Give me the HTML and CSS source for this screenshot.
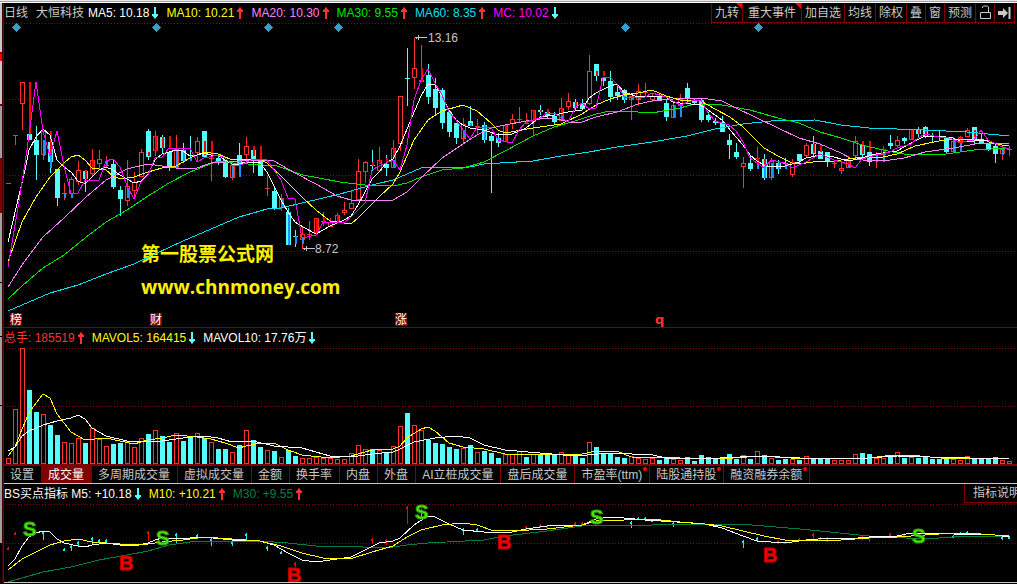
FILE: index.html
```html
<!DOCTYPE html>
<html lang="zh-CN">
<head>
<meta charset="utf-8">
<title>大恒科技 日线</title>
<link rel="stylesheet" href="styles.css">
</head>
<body>
<svg class="defs" aria-hidden="true">
  <symbol id="down" viewBox="0 0 6 12"><path d="M2 0h2v7h2v2H5v1H4v1.500H2V10H1V9H0V7h2z"/></symbol>
  <symbol id="up" viewBox="0 0 6 12"><path d="M2 12h2V5h2V3H5V2H4V.5H2V2H1v1H0v2h2z"/></symbol>
</svg>
<div class="window-edge"></div>
<div class="workspace">
  <aside class="rail"></aside>
  <main class="panes">
    <section class="pane price">
      <header class="bar">
        <div class="legend">
          <span class="plain">日线</span>
          <span class="plain name">大恒科技</span>
          <span class="white">MA5: 10.18<svg class="arrow down"><use href="#down"/></svg></span>
          <span class="yellow">MA10: 10.21<svg class="arrow up"><use href="#up"/></svg></span>
          <span class="pink">MA20: 10.30<svg class="arrow up"><use href="#up"/></svg></span>
          <span class="green">MA30: 9.55<svg class="arrow up"><use href="#up"/></svg></span>
          <span class="cyan">MA60: 8.35<svg class="arrow up"><use href="#up"/></svg></span>
          <span class="magenta">MC: 10.02<svg class="arrow down"><use href="#down"/></svg></span>
        </div>
        <nav class="tools">
          <button class="flag">九转</button>
          <button class="flag wide">重大事件</button>
          <button>加自选</button>
          <button>均线</button>
          <button>除权</button>
          <button>叠</button>
          <button>窗</button>
          <button>预测</button>
          <button class="icon" aria-label="解锁"><svg width="12" height="15" viewBox="0 0 12 15"><path d="M1.500 7.500h10v6h-10zM3.500 3V2l1-1h4l1 1v5.500" fill="none" stroke="#c8c8c8"/></svg></button>
          <button class="icon" aria-label="最后"><svg width="13" height="12" viewBox="0 0 13 12"><path d="M0 4h5V1l5 5-5 5V8H0zM10.500 0h2v12h-2z" fill="#c8c8c8"/></svg></button>
        </nav>
      </header>
      <svg id="price-chart" class="chart" viewBox="4 23 1013 304"></svg>
    </section>
    <section class="pane volume">
      <header class="bar">
        <div class="legend">
          <span class="red">总手: 185519<svg class="arrow up"><use href="#up"/></svg></span>
          <span class="yellow">MAVOL5: 164415<svg class="arrow down"><use href="#down"/></svg></span>
          <span class="white">MAVOL10: 17.76万<svg class="arrow down"><use href="#down"/></svg></span>
        </div>
      </header>
      <svg id="volume-chart" class="chart" viewBox="4 348 1013 116"></svg>
      <nav class="tabs">
        <button>设置</button>
        <button class="active">成交量</button>
        <button>多周期成交量</button>
        <button>虚拟成交量</button>
        <button>金额</button>
        <button>换手率</button>
        <button>内盘</button>
        <button>外盘</button>
        <button>AI立桩成交量</button>
        <button>盘后成交量</button>
        <button class="dot">市盈率(ttm)</button>
        <button class="dot">陆股通持股</button>
        <button class="dot">融资融券余额</button>
      </nav>
    </section>
    <section class="pane signal">
      <header class="bar">
        <div class="legend">
          <span class="white">BS买点指标 M5: +10.18<svg class="arrow down"><use href="#down"/></svg></span>
          <span class="yellow">M10: +10.21<svg class="arrow up"><use href="#up"/></svg></span>
          <span class="forest">M30: +9.55<svg class="arrow up"><use href="#up"/></svg></span>
        </div>
        <button class="explain">指标说明</button>
      </header>
      <svg id="signal-chart" class="chart" viewBox="4 503 1013 79"></svg>
    </section>
  </main>
</div>
<script src="charts.js"></script>
</body>
</html>
```
FILE: styles.css
```css
* { box-sizing: border-box; }

body {
  margin: 0;
  background: #000;
  color: #c8c8c8;
  font: 12px/18px "Liberation Sans", "Noto Sans CJK SC", sans-serif;
  overflow: hidden;
}

button {
  margin: 0;
  padding: 0;
  border: 0;
  background: none;
  color: inherit;
  font: inherit;
  white-space: nowrap;
}

.defs { display: none; }

.window-edge {
  height: 3px;
  background: linear-gradient(#e8e8e8 1px, #a0a0a0 1px 2px, #fff 2px);
}

.workspace { display: flex; }

.rail {
  flex: none;
  width: 3px;
  border-right: 1px solid #400000;
  background: linear-gradient(
    #c8c8c8 49px, #800000 49px 51px, #f00 51px 58px, #c8c8c8 58px 101px,
    #800000 101px 103px, #a0a0a0 103px 155px, #800000 155px 210px,
    #a0a0a0 210px 279px, #000 279px 280px, #a0a0a0 280px 333px,
    #000 333px 334px, #a0a0a0 334px 402px, #000 402px 403px,
    #a0a0a0 403px 540px, #000 540px);
}

.panes {
  flex: 1;
  min-width: 0;
  border-left: 1px solid #800000;
}

.pane { display: flex; flex-direction: column; }
.price { border-bottom: 1px solid #800000; }
.volume { border-bottom: 1px solid #c8c8c8; }
.signal { border-bottom: 1px solid #c8c8c8; }

.bar {
  display: flex;
  justify-content: space-between;
  height: 20px;
}
.signal .bar { height: 19px; }

.legend {
  display: flex;
  gap: 8px;
  line-height: 20px;
  white-space: nowrap;
}
.legend span { display: flex; align-items: center; }
.name { margin-right: -4px; }

.arrow { width: 6px; height: 12px; margin-left: 3px; }
.down { fill: #54fcfc; }
.up { fill: #ff3232; }

.plain { color: #c8c8c8; }
.white { color: #fff; }
.yellow { color: #ff0; }
.pink { color: #ff80ff; }
.green { color: #00e600; }
.cyan { color: #00e0f0; }
.magenta { color: #f0f; }
.red { color: #ff3232; }
.forest { color: #008040; }

.tools {
  display: flex;
  margin-right: 2px;
  border-right: 1px solid #800000;
}
.tools button {
  position: relative;
  padding: 0 3px;
  border-left: 1px solid #800000;
  border-bottom: 1px solid #800000;
}
.tools .wide { padding: 0 5px; }
.tools .icon { display: flex; align-items: center; }
.flag::after {
  content: "";
  position: absolute;
  top: 0;
  right: 0;
  border: solid transparent;
  border-width: 0 0 6px 6px;
  border-right: 0;
  border-top: 6px solid #f00;
  border-bottom: 0;
}

.chart { display: block; width: 100%; shape-rendering: crispEdges; }

.tabs {
  display: flex;
  height: 19px;
  border-top: 2px solid #800000;
}
.tabs button {
  position: relative;
  padding: 0 7px 0 6px;
  border-right: 1px solid #800000;
}
.tabs .active { background: #800000; color: #fff; }
.dot::after {
  content: "";
  position: absolute;
  top: 1px;
  right: 2px;
  width: 4px;
  height: 4px;
  border-radius: 2px;
  background: #f00;
}

.explain {
  width: 53px;
  overflow: hidden;
  padding-left: 8px;
  border-left: 1px solid #800000;
  border-bottom: 1px solid #800000;
  text-align: left;
}

.grid { stroke: #900000; stroke-dasharray: 1 2; }
.line { fill: none; stroke-width: 1; }
.quote { fill: #c8c8c8; font-size: 12px; }
.watermark {
  fill: #fff000;
  font: bold 19px "Noto Sans CJK SC", sans-serif;
}
.watermark.site { font-family: "Open Sans", sans-serif; }
.badge { fill: #fff; font: 12px "Noto Sans CJK SC", sans-serif; }
.letter-q { fill: #ff3232; font: bold 13px "DejaVu Sans", sans-serif; }
.mark { font: bold 20px "Liberation Sans", sans-serif; stroke-width: 1; }
.sell { fill: #50f000; stroke: #30a010; }
.buy { fill: #f00; stroke: #c00000; }
```
FILE: charts.js
```js
const RED = "#ff3232", CYAN = "#54fcfc", STRIP_RED = "#ff0000", STRIP_BLUE = "#1e90ff";
const xOf = i => 8 + 7 * i;
const rect = (x, y, w, h, fill) => `<rect x="${x}" y="${y}" width="${w}" height="${h}" fill="${fill}"/>`;
const box = (x, y, h) => `<rect x="${x - 1.5}" y="${y + .5}" width="4" height="${Math.max(h - 1, 1)}" fill="#000" stroke="${RED}"/>`;
const grid = y => `<path class="grid" d="M6 ${y}.5H1015"/>`;
const line = (color, pts) => `<polyline class="line" stroke="${color}" points="${pts}"/>`;
const text = (cls, x, y, s) => `<text class="${cls}" x="${x}" y="${y}">${s}</text>`;

/* One entry per day: kind high top bottom low, then optional strips "R|B from to".
   Kinds: r hollow, c filled, d red dash, e cyan dash, n none. */
const days = `
d 183 183 184 184;d 135 135 136 145;r 82 82 104 130;c 134 134 140 140 R 82 134;c 126 140 155 180;
r 131 131 155 160 B 140 156;c 131 142 162 173 R 131 155 B 155 168;c 169 169 198 206;d 183 193 194 200 B 193 198;r 177 179 194 196 B 193 198;
r 161 170 182 185;c 170 171 179 192 R 170 179;r 149 160 174 177 R 160 170;r 150 159 164 169;d 156 165 166 168 B 160 165;
c 160 164 187 189;c 186 190 199 216;r 160 186 201 206 B 188 198;r 172 182 191 196;r 149 152 177 177;
c 129 131 157 160 R 152 156;r 131 136 151 156 R 136 151;c 135 137 148 154 R 137 148;c 152 152 168 171 R 136 149;r 135 149 168 168 B 149 168;
c 143 150 161 163 B 150 161;n 136 136 136 161 B 157 161;r 137 141 153 162;c 131 131 157 157 R 141 155;d 141 158 159 181 R 141 157;
c 155 158 163 165;c 160 160 177 178;r 165 165 178 180 B 165 177;c 143 155 164 170 B 160 177;r 137 146 155 163;
c 150 150 160 173 R 146 156;c 150 160 176 176 R 146 160;d 176 188 189 196;c 188 191 208 210;r 194 198 208 211 B 199 207;
c 208 212 245 245 B 212 245;e 230 236 237 247 B 236 244;r 227 234 240 249 B 238 244;d 221 234 235 240;r 218 218 233 233 R 218 233;
d 212 221 222 226 R 218 222;r 218 222 227 227;r 213 215 222 222 R 215 222;r 202 210 213 215;r 190 203 209 209;
r 159 171 200 200;r 161 162 172 183;e 150 165 166 171 R 162 166;r 147 160 171 171 R 160 164;c 155 164 168 176 R 158 163;
r 140 148 168 168 R 148 158 B 160 167;r 96 96 144 151;e 48 78 79 106;r 38 68 78 89;d 45 80 82 82 R 68 82;
c 64 75 97 104;c 78 89 108 115;c 88 90 123 129;c 110 112 132 137;c 123 123 138 144;
r 118 124 139 144 B 130 138;c 106 121 126 126 B 123 126;d 119 126 127 134;c 122 125 140 143 B 125 140;c 134 136 141 193;
c 133 138 143 147 B 138 142;r 125 125 142 142 R 125 142;r 114 119 124 129;d 107 119 120 122;d 113 123 124 124 R 119 123;
r 110 110 122 135 R 110 121;c 105 110 112 115 R 110 112;c 109 112 116 118 R 109 113;c 112 116 122 125;r 98 108 121 121 R 108 116 B 116 121;
r 93 101 107 110;c 99 102 108 110 R 102 108;c 99 103 109 109;r 55 71 104 105;c 64 64 76 81 R 71 76;
c 78 78 81 86 R 71 76;c 71 81 97 102;c 86 92 96 100;c 89 90 100 103 B 96 100;r 96 96 100 120 B 97 100;
r 84 91 100 106 B 96 100;d 83 92 93 97;r 94 96 100 102;c 94 97 100 100;c 100 103 117 121;
r 103 105 118 118 B 105 117;r 94 99 106 110 B 106 117;c 83 88 98 103;c 98 100 103 105;c 98 100 120 122;
c 112 115 120 122;c 118 121 123 125;c 116 123 132 132;c 134 140 145 159;c 143 152 157 159;
r 157 163 167 188;c 155 163 169 171;d 147 158 159 164 R 158 164 B 164 169;c 154 159 178 180 R 159 165 B 165 178;r 158 161 178 180 B 163 178;
c 160 163 169 174 B 163 169;e 158 163 164 169 B 163 169;r 159 162 175 177 R 162 164;c 154 154 161 163;r 143 145 156 158;
c 136 144 154 156 R 144 153;c 145 151 159 159 R 145 152;c 152 152 162 167;d 160 163 164 168;r 161 168 171 174;
r 156 160 168 168 R 160 164 B 164 168;r 136 141 156 158;c 141 145 155 158 R 141 154;c 150 152 162 166 R 141 152;d 152 154 155 168 B 154 162;
r 146 149 155 155 R 149 154 B 154 162;c 135 143 146 149;r 136 140 146 147;c 137 138 141 144;r 129 129 140 140 R 129 139;
c 127 129 134 137 R 129 134;c 126 127 136 138 R 129 136;n 133 134 135 142;n 131 134 135 140;c 137 137 152 154;
r 137 141 152 153 B 141 152;r 136 137 143 143 R 137 143 B 143 152;r 128 130 137 137;c 127 127 141 145 R 130 137;c 133 141 143 144;
c 143 143 149 151;c 144 146 154 163;r 146 149 154 160 B 149 155;d 146 149 150 156`.trim().split(/;\s*/);

function candle(entry, i) {
  const p = entry.split(" "), kind = p[0], x = xOf(i);
  const [high, top, bottom, low] = p.slice(1, 5).map(Number);
  const color = "rd".includes(kind) ? RED : CYAN;
  let out = rect(x, high, 1, low - high, color);
  if (kind === "r") out += box(x, top, bottom - top);
  if (kind === "c") out += rect(x - 2, top, 5, bottom - top, color);
  if (kind === "d" || kind === "e") out += rect(x - 2, top, 5, bottom - top, color);
  for (let k = 5; k < p.length; k += 3) {
    out += rect(x, +p[k + 1], 2, p[k + 2] - p[k + 1], p[k] === "R" ? STRIP_RED : STRIP_BLUE);
  }
  return out;
}

const averages = [
  ["#00e0f0", "8,311 50,293 78,285 106,274 134,264 155,254 183,241 211,229 239,217 267,209 281,208 302,203 340,194 372,185 393,180 421,168 470,167 484,164 533,161 561,156 589,152 617,147 652,142 687,136 715,129 743,124 771,121 815,120 841,125 869,128 925,130 967,132 1009,136"],
  ["#00e600", "8,299 22,286 43,268 64,255 85,238 106,222 127,210 148,196 169,183 190,172 218,161 233,163 277,166 303,175 340,182 365,185 393,186 407,183 421,177 442,170 463,168 484,162 505,151 533,136 554,127 575,121 596,114 610,111 638,112 652,113 680,108 694,104 722,105 750,110 778,118 799,123 820,132 841,138 862,145 883,150 904,154 946,154 974,150 1009,148"],
  ["#ff80ff", "8,287 22,265 43,237 64,218 85,198 106,180 127,169 148,164 162,166 176,168 190,169 197,168 211,163 239,161 260,160 274,161 295,173 316,184 337,196 351,200 393,200 407,192 421,178 442,158 463,144 477,135 491,128 505,125 526,121 547,118 561,120 573,123 582,122 596,117 617,112 638,104 652,101 673,99 687,98 701,98 722,101 736,108 757,118 778,128 799,138 820,144 841,153 850,158 869,161 890,160 904,158 925,152 953,148 981,143 1009,143"],
  ["#ffff00", "8,262 22,222 36,197 50,177 64,163 71,157 78,155 85,160 92,168 106,170 113,176 120,179 134,177 148,172 162,168 176,166 190,158 204,152 218,154 230,159 260,159 267,163 281,176 302,197 316,210 330,221 351,224 358,218 379,197 393,184 400,172 414,140 428,120 442,111 463,105 477,111 491,123 498,130 505,133 533,128 561,124 582,114 596,105 610,99 624,95 638,93 652,90 666,96 680,100 701,101 715,109 730,117 743,127 757,141 764,148 778,156 792,163 806,163 820,161 834,161 848,159 862,157 883,157 897,154 915,146 939,141 953,139 981,139 995,144 1009,146"],
  ["#ffffff", "8,242 25,170 29,150 36,137 43,129 50,135 57,160 64,167 71,172 78,181 85,184 92,177 99,170 106,167 113,170 120,175 127,179 134,183 141,181 148,174 155,160 162,154 169,152 176,150 183,151 190,156 197,155 204,153 211,155 218,155 225,160 232,164 239,164 246,162 260,163 267,172 274,186 281,200 288,212 295,222 303,227 316,234 330,226 344,220 351,216 358,205 372,179 379,172 386,163 393,159 400,146 412,117 421,96 428,84 435,85 442,96 449,110 456,120 463,125 470,128 484,130 498,135 512,134 526,128 540,117 554,115 568,112 582,110 589,98 596,93 610,86 617,84 624,92 638,97 652,96 666,97 673,102 680,103 701,105 708,110 722,120 736,137 743,145 750,155 757,161 764,165 771,167 785,166 799,162 806,158 820,155 834,157 848,161 862,158 876,154 897,151 911,143 925,136 939,136 953,138 960,141 974,141 988,140 1002,147 1009,149"],
  ["#ff00ff", "8,267 20,195 27,150 36,82 43,131 50,156 57,131 64,166 71,194 78,193 85,180 99,180 106,161 113,159 120,167 127,186 134,199 141,182 148,175 155,158 162,157 169,148 190,148 197,162 204,158 218,155 225,158 232,165 239,166 253,159 267,160 281,180 288,198 295,199 302,238 316,235 323,222 344,223 351,217 365,203 372,170 379,166 393,160 400,170 407,145 414,100 421,80 428,69 435,83 442,95 449,112 456,120 463,130 470,139 477,127 491,127 498,140 512,143 519,130 526,122 540,118 547,113 554,113 568,122 575,108 582,103 589,109 596,108 603,77 610,77 617,84 624,97 645,97 652,93 666,97 680,105 694,100 701,100 708,113 715,121 729,125 736,131 743,142 750,158 757,163 764,168 771,160 785,163 792,168 806,162 820,154 834,160 848,164 855,168 862,159 876,155 890,152 897,148 911,144 918,138 925,134 939,137 946,137 960,142 974,140 981,130 988,140 1002,147 1009,149"]
];

const diamonds = [16, 156, 268, 338, 625, 758];
const pointer = (x, y) => `<path d="M${x} ${y}.5h12M${x + 1} ${y - .5}v2M${x + 3} ${y - 2}v5" stroke="#c8c8c8"/>`;
const badge = (x, s) => rect(x, 313, 12, 13, "#800000") + text("badge", x, 324, s);

document.getElementById("price-chart").innerHTML =
  [23, 99, 175, 251].map(grid).join("") +
  text("watermark", 141, 261, "第一股票公式网") +
  text("watermark site", 141, 294, "www.chnmoney.com") +
  diamonds.map(x => `<path fill="#30a0d0" d="M${x}.5 23l4.500 4.500-4.500 4.500-4.500-4.500z"/>`).join("") +
  days.map(candle).join("") +
  averages.map(a => line(a[0], a[1])).join("") +
  pointer(415, 37) + text("quote", 428, 42, "13.16") +
  pointer(303, 248) + text("quote", 315, 253, "8.72") +
  badge(10, "榜") + badge(150, "财") + badge(395, "涨") +
  text("letter-q", 655, 324, "q");

/* Bar tops of the volume chart, r hollow / c filled */
const volumes = `r458 r409 r348 c390 c412 r414 c425 c435 r442 r443 r438 c443 r428 r439 r446 c444 c443 r441 r447 r438
c434 r430 c436 c442 r433 c441 c437 r433 c438 r442 c449 c449 r452 c445 r430 c440 c447 r450 c451 r457
c450 c456 r458 r458 r457 r458 r458 r459 r459 r453 r445 r449 c449 r450 c452 r446 r426 c413 r425 r430
c440 c443 c444 c447 c449 r448 c445 r452 c451 c453 c458 r454 r454 r451 c457 r454 c454 c455 c455 r452
r454 c455 c458 r442 c447 c454 c454 c457 c458 r456 r458 r459 r458 c460 c458 r459 r460 c457 c461 c455
c457 c459 c459 c454 c459 r455 c459 r451 c455 r458 c460 c459 r459 c460 r456 c459 c459 c459 r460 r460
r460 r454 c453 c454 r458 r458 c457 r452 c458 r457 c458 c457 c459 c459 c459 r459 r460 r456 c459 c459
c459 c457 r460 r461`.split(/\s+/);

document.getElementById("volume-chart").innerHTML =
  grid(348) + grid(406) +
  volumes.map((v, i) => {
    const top = +v.slice(1), x = xOf(i);
    return v[0] === "r" ? box(x, top, 464 - top) : rect(x - 2, top, 5, 464 - top, CYAN);
  }).join("") +
  line("#ffff00", "8,456 15,447 22,429 29,413 36,403 43,394 50,398 57,414 71,432 85,440 106,438 120,441 134,444 148,440 162,438 176,435 197,437 211,439 225,443 239,448 246,446 260,443 274,443 288,450 302,455 330,458 351,456 372,450 393,449 400,446 407,438 421,429 428,427 435,431 449,443 463,447 484,449 505,454 582,454 596,451 617,451 631,457 680,458 720,459 760,456 790,458 860,459 885,456 910,455 940,458 1009,459") +
  line("#ffffff", "8,451 15,447 22,436 29,431 43,425 57,421 71,418 78,415 85,419 92,428 106,436 127,441 162,441 183,438 204,436 218,438 232,442 253,441 274,446 302,448 330,456 351,457 372,454 393,452 400,449 414,442 435,438 456,436 470,438 484,445 505,450 540,453 575,456 610,453 653,455 666,458 700,459 760,456 800,458 853,459 897,456 930,457 1009,459");

/* x, from, to, color key of the small ticks */
const ticks = `8 547 548 R;15 532 535 R;43 531 540 C;64 548 551 C;71 545 551 C;78 541 547 C;92 537 544 C;99 539 543 C;106 539 543 C;
148 531 541 R;176 533 544 C;197 534 539 C;211 538 546 C;232 541 546 C;246 533 540 C;267 546 551 C;281 551 554 C;295 562 567 R;
372 538 544 R;386 539 545 R;407 506 524 R;421 509 518 C;463 528 535 C;477 528 532 C;526 526 530 R;540 524 528 R;547 525 528 R;554 527 530 R;
575 522 525 R;582 522 525 R;631 521 528 C;638 517 520 C;645 517 521 C;652 519 522 C;673 522 527 C;
743 540 548 C;757 537 542 C;778 540 544 R;785 541 543 R;799 538 541 R;813 533 539 R;820 537 539 R;827 537 542 R;
862 536 540 R;869 536 542 R;890 533 537 R;904 533 537 R;953 535 538 C;960 532 535 C;967 531 534 C;1002 536 540 C;1009 536 538 C`.split(/;\s*/);

document.getElementById("signal-chart").innerHTML =
  grid(504) + grid(543) +
  ticks.map(t => {
    const [x, y1, y2, c] = t.split(" ");
    return rect(+x, +y1, 1, y2 - y1, c === "R" ? "#ff0000" : "#00ffff") + rect(x - 1, +y1 + 1, 2, 2, c === "R" ? "#ff0000" : "#00ffff");
  }).join("") +
  line("#008040", "8,582 43,572 71,567 99,560 127,555 148,551 169,545 190,542 211,541 260,541 288,543 316,546 340,546 386,548 407,545 428,543 484,540 505,536 547,531 582,526 610,525 652,525 680,524 740,524 764,526 800,529 869,536 925,539 967,536 1009,536") +
  line("#ffffff", "8,566 15,559 22,546 29,537 36,533 43,531 50,532 57,539 64,543 78,546 85,547 92,545 106,543 120,545 134,546 148,543 155,540 162,538 190,538 204,537 232,540 260,541 274,545 288,553 302,560 316,562 337,559 351,557 365,550 379,543 393,541 400,538 414,525 428,516 435,517 449,524 463,530 484,532 512,532 526,529 547,526 582,525 596,519 610,517 624,518 645,520 677,522 705,524 722,528 743,536 757,541 771,542 792,542 806,540 830,538 848,539 869,537 897,536 911,533 939,533 953,534 995,535 1009,537") +
  line("#ffff00", "8,570 22,559 36,552 50,545 64,541 78,539 92,542 120,544 141,545 162,542 183,540 204,537 232,539 260,541 281,546 302,553 323,558 350,559 372,552 393,546 407,537 421,530 442,525 463,523 477,525 491,530 512,531 547,529 582,525 596,521 624,520 652,519 680,522 705,524 722,526 743,531 764,536 785,540 841,540 869,538 897,537 925,535 953,533 981,534 1009,536") +
  [[23, 536], [156, 545], [415, 519], [590, 524], [912, 543]].map(p => text("mark sell", p[0], p[1], "S")).join("") +
  [[119, 570], [287, 582], [497, 549], [763, 562]].map(p => text("mark buy", p[0], p[1], "B")).join("");
```
